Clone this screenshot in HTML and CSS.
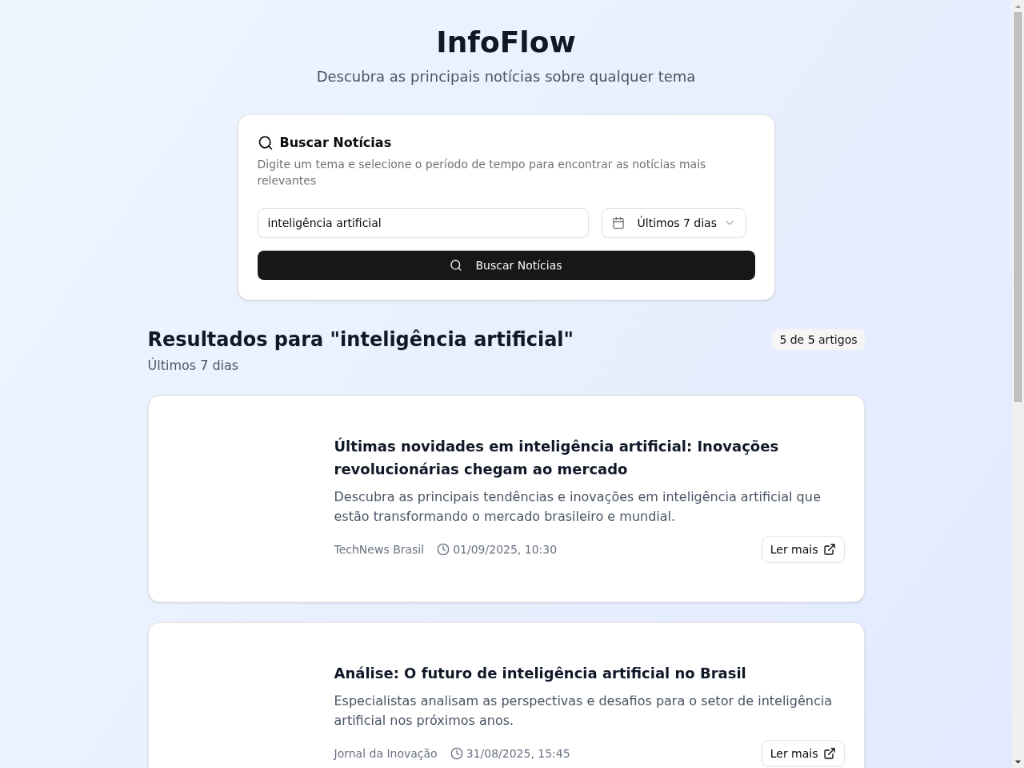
FILE: index.html
```html
<!DOCTYPE html>
<html lang="pt-BR">
<head>
<meta charset="utf-8">
<title>InfoFlow</title>
<link rel="stylesheet" href="styles.css">
</head>
<body>
<div class="window">
  <div class="viewport">
  <main class="page">
    <header class="hero">
      <h1 class="hero-title">InfoFlow</h1>
      <p class="hero-subtitle">Descubra as principais notícias sobre qualquer tema</p>
    </header>

    <section class="card search">
      <h2 class="search-title">
        <svg class="icon icon-lg" viewBox="0 0 24 24"><circle cx="11" cy="11" r="8"/><path d="m21 21-4.3-4.3"/></svg>
        <span>Buscar Notícias</span>
      </h2>
      <p class="search-text">Digite um tema e selecione o período de tempo para encontrar as notícias mais relevantes</p>
      <form class="search-form">
        <div class="search-row">
          <input class="field" type="text" value="inteligência artificial">
          <button class="select" type="button">
            <svg class="icon icon-muted" viewBox="0 0 24 24"><path d="M8 2v4M16 2v4M3 10h18"/><rect x="3" y="4" width="18" height="18" rx="2"/></svg>
            <span class="select-value">Últimos 7 dias</span>
            <svg class="icon icon-faint" viewBox="0 0 24 24"><path d="m6 9 6 6 6-6"/></svg>
          </button>
        </div>
        <button class="submit" type="button">
          <svg class="icon" viewBox="0 0 24 24"><circle cx="11" cy="11" r="8"/><path d="m21 21-4.3-4.3"/></svg>
          <span>Buscar Notícias</span>
        </button>
      </form>
    </section>

    <section class="results">
      <div class="results-head">
        <div>
          <h2 class="results-title">Resultados para "inteligência artificial"</h2>
          <p class="results-period">Últimos 7 dias</p>
        </div>
        <span class="badge">5 de 5 artigos</span>
      </div>

      <article class="card article">
        <div class="thumb"></div>
        <div class="article-body">
          <h3 class="article-title">Últimas novidades em inteligência artificial: Inovações revolucionárias chegam ao mercado</h3>
          <p class="article-text">Descubra as principais tendências e inovações em inteligência artificial que estão transformando o mercado brasileiro e mundial.</p>
          <div class="article-foot">
            <div class="meta">
              <span>TechNews Brasil</span>
              <span class="meta-date"><svg class="icon" viewBox="0 0 24 24"><circle cx="12" cy="12" r="10"/><path d="M12 6v6l4 2"/></svg><span>01/09/2025, 10:30</span></span>
            </div>
            <a class="more"><span>Ler mais</span><svg class="icon" viewBox="0 0 24 24"><path d="M15 3h6v6M10 14 21 3M18 13v6a2 2 0 0 1-2 2H5a2 2 0 0 1-2-2V8a2 2 0 0 1 2-2h6"/></svg></a>
          </div>
        </div>
      </article>

      <article class="card article">
        <div class="thumb"></div>
        <div class="article-body">
          <h3 class="article-title">Análise: O futuro de inteligência artificial no Brasil</h3>
          <p class="article-text">Especialistas analisam as perspectivas e desafios para o setor de inteligência artificial nos próximos anos.</p>
          <div class="article-foot">
            <div class="meta">
              <span>Jornal da Inovação</span>
              <span class="meta-date"><svg class="icon" viewBox="0 0 24 24"><circle cx="12" cy="12" r="10"/><path d="M12 6v6l4 2"/></svg><span>31/08/2025, 15:45</span></span>
            </div>
            <a class="more"><span>Ler mais</span><svg class="icon" viewBox="0 0 24 24"><path d="M15 3h6v6M10 14 21 3M18 13v6a2 2 0 0 1-2 2H5a2 2 0 0 1-2-2V8a2 2 0 0 1 2-2h6"/></svg></a>
          </div>
        </div>
      </article>
    </section>
  </main>
  </div>

  <div class="scrollbar">
    <svg class="arrow arrow-off" viewBox="0 0 12 12"><path d="M3 8h6L6 5z"/></svg>
    <div class="scroll-thumb"></div>
    <svg class="arrow" viewBox="0 0 12 12"><path d="M3 4.500h6L6 7.500z"/></svg>
  </div>
</div>
</body>
</html>
```
FILE: styles.css
```css
*, *::before, *::after { box-sizing: border-box; margin: 0; padding: 0; }
html, body { height: 100%; overflow: hidden; }
body {
  font-family: "DejaVu Sans", sans-serif;
  font-size: 16px;
  color: #0a0a0a;
}
button, input { font: inherit; color: inherit; }

.window { display: flex; height: 768px; }
.viewport { width: 1012px; height: 768px; overflow: hidden; }

/* The page is laid out at 1265px wide and scaled down to the viewport. */
.page {
  width: 1265px;
  height: 1795px;
  padding: 32px 0;
  transform: scale(.8, .8163);
  transform-origin: 0 0;
  will-change: transform;
  background: linear-gradient(to bottom right, #eff6ff, #dee7ff);
}

.icon {
  width: 16px;
  height: 16px;
  flex: none;
  fill: none;
  stroke: currentColor;
  stroke-width: 2;
  stroke-linecap: round;
  stroke-linejoin: round;
}
.icon-lg { width: 20px; height: 20px; }
.icon-muted { color: #737373; }
.icon-faint { color: #b4b4b4; }

.hero { margin-bottom: 32px; text-align: center; }
.hero-title { font-size: 36px; line-height: 40px; color: #101828; }
.hero-subtitle { margin-top: 8px; font-size: 18px; line-height: 28px; color: #4a5565; }

.card {
  background: #fff;
  border: 1px solid #e5e5e5;
  border-radius: 14px;
  box-shadow: 0 1px 3px rgba(0, 0, 0, .1), 0 1px 2px -1px rgba(0, 0, 0, .1);
}

.search { width: 672px; margin: 0 auto; padding: 24px; }
.search-title { display: flex; align-items: center; gap: 8px; font-size: 16px; line-height: 20px; }
.search-text { margin-top: 6px; font-size: 14px; line-height: 20px; color: #737373; }
.search-form { display: flex; flex-direction: column; gap: 16px; margin-top: 24px; font-size: 14px; }
.search-row { display: flex; gap: 16px; padding-right: 11px; }
.field, .select {
  height: 36px;
  border: 1px solid #e5e5e5;
  border-radius: 8px;
  background: #fff;
  box-shadow: 0 1px 2px rgba(0, 0, 0, .05);
}
.field { flex: 1; min-width: 0; padding: 0 12px; }
.select { display: flex; align-items: center; width: 181px; padding: 0 12px; }
.select-value { margin: 0 auto 0 16px; }
.submit {
  display: flex;
  align-items: center;
  justify-content: center;
  gap: 16px;
  height: 36px;
  border: 0;
  border-radius: 8px;
  background: #171717;
  color: #fafafa;
}

.results { width: 896px; margin: 32px auto 0; }
.results-head { display: flex; align-items: flex-start; justify-content: space-between; margin-bottom: 24px; }
.results-title { font-size: 24px; line-height: 32px; color: #101828; }
.results-period { margin-top: 4px; line-height: 24px; color: #4a5565; }
.badge {
  margin-top: 3px;
  padding: 3px 9px;
  border-radius: 8px;
  background: #f5f5f5;
  font-size: 14px;
  line-height: 20px;
  color: #171717;
}

.article { display: flex; padding: 48px 24px; margin-bottom: 24px; }
.thumb { width: 208px; flex: none; }
.article-body { flex: 1; }
.article-title { font-size: 18px; line-height: 28px; color: #101828; }
.article-text { margin-top: 8px; line-height: 24px; color: #4a5565; }
.article-foot { display: flex; align-items: center; justify-content: space-between; margin-top: 12px; }
.meta { display: flex; gap: 16px; font-size: 14px; line-height: 20px; color: #6a7282; }
.meta-date { display: flex; align-items: center; gap: 4px; }
.more {
  display: flex;
  align-items: center;
  gap: 6px;
  height: 32px;
  padding: 0 10px;
  border: 1px solid #e5e5e5;
  border-radius: 8px;
  font-size: 14px;
  box-shadow: 0 1px 2px rgba(0, 0, 0, .05);
}

.scrollbar { display: flex; flex-direction: column; width: 12px; background: #f0f0f0; }
.arrow { width: 12px; height: 12px; fill: #404040; }
.arrow-off { fill: #a3a3a3; }
.scroll-thumb { height: 390px; margin: 0 1.6px auto; background: #c0c0c0; }
```
